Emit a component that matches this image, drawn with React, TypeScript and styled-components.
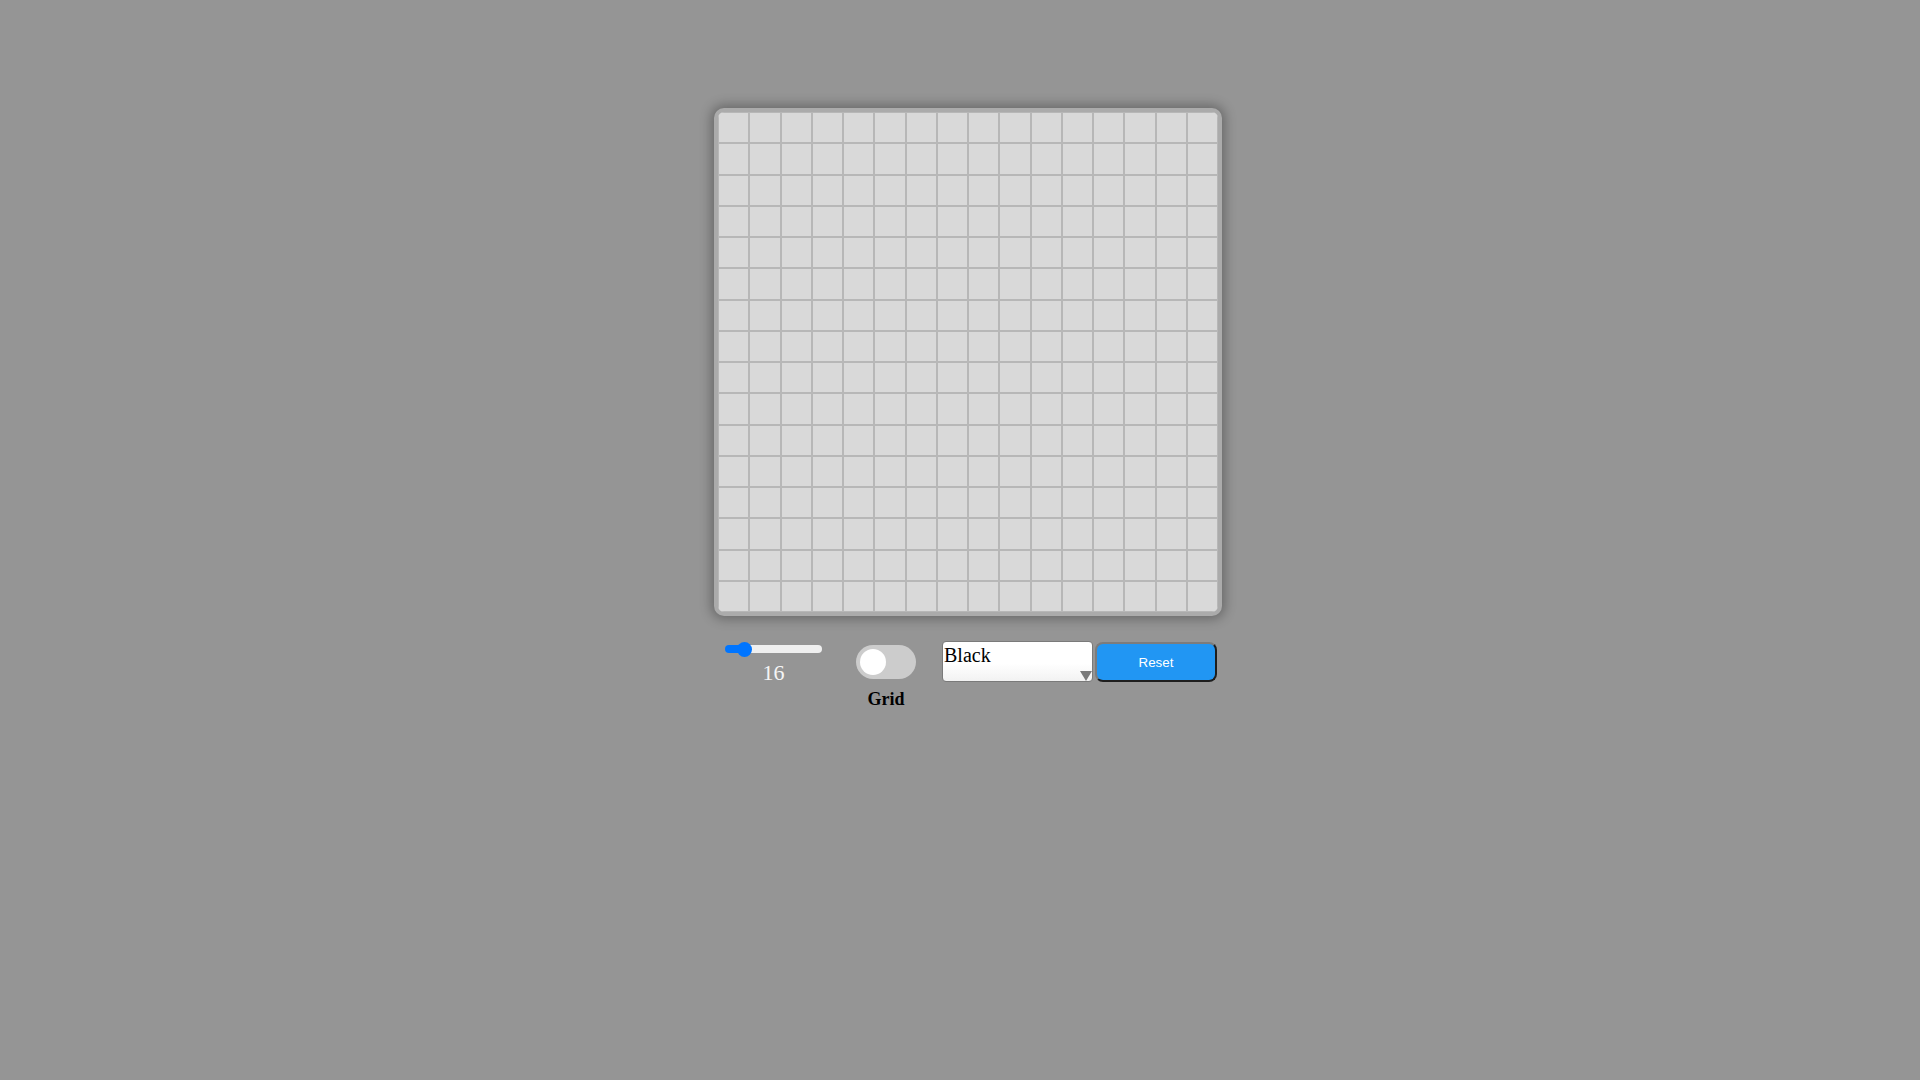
import React, { useState } from "react";
import styled, { createGlobalStyle } from "styled-components";

const GlobalStyle = createGlobalStyle`
    html, body {
        margin: 0;
        padding: 0;
        background-color: #959595;
        font-family: "Liberation Serif", "Times New Roman", serif;
    }
`;

const Page = styled.main`
    min-height: 100vh;
    display: flex;
    flex-direction: column;
    align-items: center;
    padding: 108px 0 0 16px;
    box-sizing: border-box;
`;

const Board = styled.div<{ $size: number }>`
    width: 508px;
    height: 508px;
    box-sizing: border-box;
    border: 4px solid #ababab;
    border-radius: 10px;
    overflow: hidden;
    display: grid;
    grid-template-columns: repeat(${(p) => p.$size}, 1fr);
    grid-template-rows: repeat(${(p) => p.$size}, 1fr);
    background-color: #d9d9d9;
    box-shadow: 0 0 12px 3px rgba(0, 0, 0, 0.3);
`;

const Cell = styled.div<{ $grid: boolean }>`
    box-sizing: border-box;
    border: 1px solid ${(p) => (p.$grid ? "#b7b7b7" : "transparent")};
`;

const Controls = styled.div`
    width: 508px;
    margin-top: 25px;
    display: flex;
    align-items: flex-start;
`;

const SliderGroup = styled.div`
    margin-left: 11px;
    width: 97px;
    display: flex;
    flex-direction: column;
    align-items: center;
`;

const Range = styled.input`
    -webkit-appearance: none;
    appearance: none;
    width: 97px;
    height: 8px;
    margin: 4px 0 0;
    border-radius: 4px;
    outline: none;
    cursor: pointer;

    &::-webkit-slider-thumb {
        -webkit-appearance: none;
        width: 15px;
        height: 15px;
        border-radius: 50%;
        background: #0075ff;
        border: none;
    }
`;

const SizeLabel = styled.span`
    margin-top: 7px;
    font-size: 22px;
    line-height: 25px;
    color: #f5f5f5;
`;

const ToggleGroup = styled.label`
    margin-left: 34px;
    margin-top: 4px;
    width: 60px;
    display: flex;
    flex-direction: column;
    align-items: center;
    cursor: pointer;
`;

const Switch = styled.span<{ $on: boolean }>`
    width: 60px;
    height: 34px;
    border-radius: 34px;
    background-color: ${(p) => (p.$on ? "#2196f3" : "#ccc")};
    display: flex;
    align-items: center;
    padding: 0 4px;
    box-sizing: border-box;
    justify-content: ${(p) => (p.$on ? "flex-end" : "flex-start")};

    &::before {
        content: "";
        width: 26px;
        height: 26px;
        border-radius: 50%;
        background-color: #fff;
    }
`;

const HiddenCheck = styled.input`
    display: none;
`;

const ToggleText = styled.span`
    margin-top: 10px;
    font-size: 18px;
    font-weight: bold;
    line-height: 21px;
    color: #000;
`;

const SelectBox = styled.div`
    position: relative;
    margin-left: 26px;
    width: 151px;
    height: 41px;

    &::after {
        content: "";
        position: absolute;
        right: 1px;
        bottom: 1px;
        border-left: 6.5px solid transparent;
        border-right: 6.5px solid transparent;
        border-top: 10px solid #7a7a7a;
        pointer-events: none;
    }
`;

const ColorSelect = styled.select`
    -webkit-appearance: none;
    appearance: none;
    width: 100%;
    height: 100%;
    box-sizing: border-box;
    margin: 0;
    padding: 2px 0 14px 1px;
    border: 1px solid #7a7a7a;
    border-radius: 4px;
    background: linear-gradient(#fff 55%, #f2f2f2);
    font-family: "Liberation Serif", "Times New Roman", serif;
    font-size: 20px;
    line-height: 23px;
    color: #000;
    outline: none;
`;

const ResetButton = styled.button`
    margin-left: 2px;
    margin-top: 1px;
    width: 122px;
    height: 40px;
    box-sizing: border-box;
    border: 2px solid;
    border-color: #7c7c7c #1e1e1e #1e1e1e #7c7c7c;
    border-radius: 8px;
    background-color: #2196f3;
    color: #fff;
    font-family: "Liberation Sans", Arial, sans-serif;
    font-size: 13.333px;
    cursor: pointer;
`;

const App = () => {
    const [size, setSize] = useState(16);
    const [showGrid, setShowGrid] = useState(true);
    const [color, setColor] = useState("black");

    const pct = ((size - 1) / 99) * 100;
    const cells = Array.from({ length: size * size });

    return (
        <>
            <GlobalStyle />
            <Page>
                <Board $size={size}>
                    {cells.map((_, i) => (
                        <Cell key={i} $grid={showGrid} />
                    ))}
                </Board>

                <Controls>
                    <SliderGroup>
                        <Range
                            type="range"
                            min={1}
                            max={100}
                            value={size}
                            onChange={(e) => setSize(Number(e.target.value))}
                            style={{
                                background: `linear-gradient(to right, #0075ff ${pct}%, #efefef ${pct}%)`,
                            }}
                        />
                        <SizeLabel>{size}</SizeLabel>
                    </SliderGroup>

                    <ToggleGroup>
                        <HiddenCheck
                            type="checkbox"
                            checked={!showGrid}
                            onChange={() => setShowGrid(!showGrid)}
                        />
                        <Switch $on={!showGrid} />
                        <ToggleText>Grid</ToggleText>
                    </ToggleGroup>

                    <SelectBox>
                        <ColorSelect value={color} onChange={(e) => setColor(e.target.value)}>
                            <option value="black">Black</option>
                            <option value="rainbow">Rainbow</option>
                            <option value="eraser">Eraser</option>
                        </ColorSelect>
                    </SelectBox>

                    <ResetButton onClick={() => setSize(16)}>Reset</ResetButton>
                </Controls>
            </Page>
        </>
    );
};

export default App;
